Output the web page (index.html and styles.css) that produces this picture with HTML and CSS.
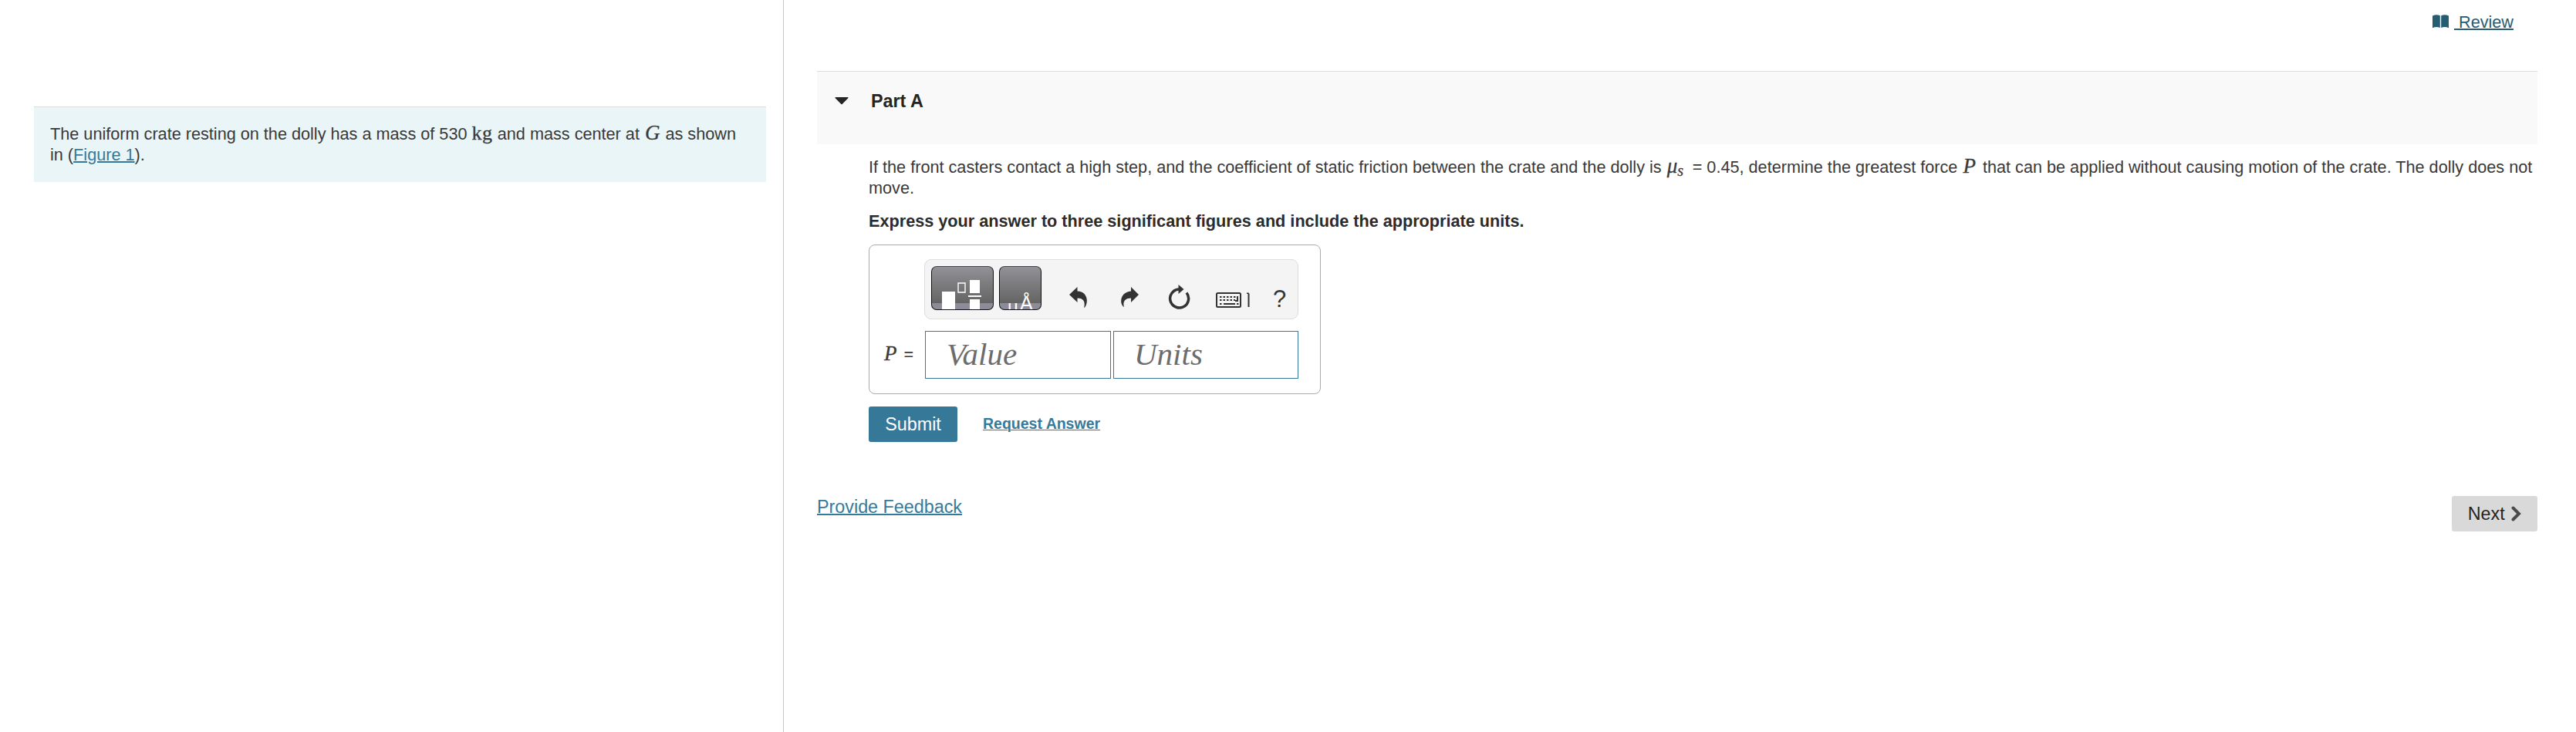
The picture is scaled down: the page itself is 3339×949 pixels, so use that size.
FILE: index.html
```
<!DOCTYPE html>
<html lang="en">
	<head>
		<meta charset="utf-8">
		<title>Part A</title>
		<link rel="stylesheet" href="styles.css">
	</head>
	<body>
		<div class="page">
			<div class="left">
				<div class="problem">
					The uniform crate resting on the dolly has a mass of 530 <span class="math kg">kg</span> and mass center at <i class="math g">G</i> as shown<br>
					in (<a href="#">Figure 1</a>).
				</div>
			</div>
			<div class="right">
				<div class="topbar">
					<svg class="book" width="21" height="18" viewBox="0 0 21 18"><path d="M0 1.5Q5 -1 9.800 1.2V17Q5 14.8 0 17.2ZM11.2 1.2Q16 -1 21 1.5V17.2Q16 14.8 11.2 17Z"/></svg>
					<a href="#" class="review">&nbsp;Review</a>
				</div>
				<div class="parthead">
					<svg class="caret" width="18" height="10" viewBox="0 0 18 10"><path d="M1 0H17Q18 .6 17.3 1.3L9.7 9Q9 9.7 8.3 9L.7 1.3Q0 .6 1 0Z"/></svg>
					<b>Part A</b>
				</div>
				<div class="part">
					<p class="question">If the front casters contact a high step, and the coefficient of static friction between the crate and the dolly is <i class="math mu">&mu;<span class="sub">s</span></i> = 0.45, determine the greatest force <i class="math p">P</i> that can be applied without causing motion of the crate. The dolly does not<br>move.</p>
					<p class="express">Express your answer to three significant figures and include the appropriate units.</p>
					<div class="answer">
						<div class="toolbar">
							<button class="tool template">
								<svg width="79" height="55" viewBox="0 0 79 55"><path fill="#fff" d="M13 32H30V55H13ZM49 17H62V34H49ZM47 37H64V39H47ZM49 42H62V55H49Z"/><path fill="none" stroke="#fff" stroke-width="1.4" d="M34 21H43V33H34Z"/></svg>
							</button>
							<button class="tool units">
								<svg width="53" height="55" viewBox="0 0 53 55"><text x="10" y="60" class="glyph">&mu;</text><text x="26" y="56" class="glyph angstrom">&Aring;</text></svg>
							</button>
							<svg class="icon undo" width="24" height="28" viewBox="0 0 24 28"><path d="M0 11L10.5 1V6.5C20 6.5 25 15 22 24Q21 27 19 28C21 21 19 15.500 10.500 15.500V21Z"/></svg>
							<svg class="icon redo" width="24" height="28" viewBox="0 0 24 28"><path d="M23 11L13 1V6.500C3 7.500 -1 15 0.500 22Q1.500 26 4 27C2 20.500 5 15.500 13 15.500V21Z"/></svg>
							<svg class="icon reset" width="30" height="32" viewBox="0 0 30 32"><path class="line" d="M15 6A12 12 0 1 0 25 10.500"/><path d="M14.500 0L21.500 6L14.500 12Z"/></svg>
							<svg class="icon keyboard" width="46" height="20" viewBox="0 0 46 20"><rect x="1" y="1" width="31" height="18" rx="1.500" class="line thin"/><path class="keys" d="M5 6H26M5 10H25"/><path d="M27 5H29V12H25V10H27ZM5 14H7.500V16H5ZM10 14H25V16H10ZM27 14H29.500V16H27ZM40 .5H42.500L43.500 2V19H41.500V2H40Z"/></svg>
							<span class="help">?</span>
						</div>
						<div class="row">
							<label><i class="math label">P</i> =</label>
							<input class="field" placeholder="Value">
							<input class="field" placeholder="Units">
						</div>
					</div>
					<div class="actions">
						<button class="submit">Submit</button>
						<a href="#" class="request">Request Answer</a>
					</div>
				</div>
				<div class="footer">
					<a href="#" class="feedback">Provide Feedback</a>
					<button class="next">Next <svg width="13" height="20" viewBox="0 0 13 20"><path d="M2.500 2.500L10 10L2.500 17.500"/></svg></button>
				</div>
			</div>
		</div>
	</body>
</html>
```
FILE: styles.css
```
* {
	box-sizing: border-box;
}

body {
	margin: 0;
	background: #FFF;
	color: #393939;
	font: 21.667px/27px "Liberation Sans", Arial, sans-serif;
}

a {
	color: #367A9B;
	text-decoration-thickness: 2px;
}

p {
	margin: 0;
}

button {
	font: 23.333px/27px "Liberation Sans", Arial, sans-serif;
	border: 0;
	padding: 0;
}

.page {
	display: flex;
	height: 949px;
}

.left {
	width: 1016px;
	border-right: 1px solid #BFC7D8;
	padding: 138px 22px 0 44px;
}

.problem {
	height: 98px;
	border-top: 1px solid #DADDDD;
	background: #EAF5F8;
	padding: 21px 0 0 21px;
	white-space: nowrap;
}

.math {
	font-family: "Liberation Serif", serif;
	font-size: 27px;
	line-height: 24px;
	-webkit-text-stroke: .3px;
}

.kg {
	font-size: 26px;
	letter-spacing: .6px;
}

.g {
	padding: 0 1px;
}

.right {
	flex: 1;
	padding: 0 50px 0 43px;
}

.topbar {
	display: flex;
	justify-content: flex-end;
	height: 92px;
	padding: 15px 31px 0 0;
}

.book {
	margin: 4px 7px 0 0;
	fill: #265D73;
}

.review {
	color: #265D73;
}

.parthead {
	display: flex;
	height: 95px;
	border-top: 1px solid #DDD;
	background: #F9F9F9;
	padding: 25px 0 0 22px;
	color: #252525;
	font-size: 23.333px;
}

.caret {
	margin: 8px 29px 0 1px;
	fill: #252525;
}

.part {
	margin-left: 67px;
}

.question {
	padding-top: 16px;
	white-space: nowrap;
}

.mu {
	display: inline-block;
	width: 27px;
	margin-left: 1px;
}

.sub {
	font-size: 20px;
	line-height: 10px;
	vertical-align: -4px;
}

.p {
	padding: 0 3px 0 1px;
}

.express {
	margin-top: 16px;
	color: #2B2B2B;
	font-weight: bold;
}

.answer {
	width: 586px;
	height: 194px;
	margin-top: 17px;
	border: 1px solid #AAA;
	border-radius: 8px;
	padding: 18px 28px 0 19px;
}

.toolbar {
	display: flex;
	height: 78px;
	margin-left: 52px;
	border: 1px solid #DDD;
	border-radius: 9px;
	background: #F4F4F4;
	padding: 8px;
}

.tool {
	height: 57px;
	border: 1px solid #111;
	border-top-color: #444;
	border-radius: 7px;
	background: linear-gradient(#919197, #646464 47px, #8D8B99 47px);
	overflow: hidden;
}

.tool svg {
	display: block;
}

.template {
	width: 81px;
}

.units {
	width: 55px;
	margin-left: 7px;
}

.glyph {
	fill: #FFF;
	font: 24px "Liberation Sans", Arial, sans-serif;
}

.angstrom {
	font-size: 25px;
}

.icon {
	fill: #333;
}

.undo {
	margin: 26px 0 0 36px;
}

.redo {
	margin: 26px 0 0 43px;
}

.reset {
	margin: 24px 0 0 36px;
}

.keyboard {
	margin: 34px 0 0 33px;
}

.line {
	fill: none;
	stroke: #333;
	stroke-width: 3.5;
}

.thin {
	stroke-width: 2;
}

.keys {
	fill: none;
	stroke: #333;
	stroke-width: 2;
	stroke-dasharray: 2.5 2;
}

.help {
	margin: 29px 0 0 28px;
	color: #333;
	font-size: 31px;
}

.row {
	display: flex;
	margin-top: 15px;
}

.row label {
	width: 53px;
	padding-top: 17px;
	white-space: nowrap;
}

.label {
	padding-right: 3px;
}

.field {
	width: 241px;
	height: 62px;
	border: 1px solid #367A9B;
	padding: 0 0 3px 27px;
	font: italic 41px "Liberation Serif", serif;
}

.field + .field {
	width: 240px;
	margin-left: 3px;
	padding-left: 26px;
}

.field::placeholder {
	color: #6C6C6C;
}

.actions {
	display: flex;
	margin-top: 16px;
}

.submit {
	width: 115px;
	height: 46px;
	border-radius: 3px;
	background: #367898;
	color: #FFF;
}

.request {
	margin: 9px 0 0 33px;
	font-size: 19.5px;
	font-weight: bold;
	text-decoration-thickness: 1px;
}

.footer {
	display: flex;
	justify-content: space-between;
	margin-top: 70px;
}

.feedback {
	padding-top: 1px;
	font-size: 23.333px;
}

.next {
	width: 111px;
	height: 46px;
	border-radius: 3px;
	background: #D9D9D9;
	color: #252525;
}

.next svg {
	margin-left: 2px;
	fill: none;
	stroke: #4B4B4B;
	stroke-width: 4;
	stroke-linecap: round;
	vertical-align: -2px;
}
```
